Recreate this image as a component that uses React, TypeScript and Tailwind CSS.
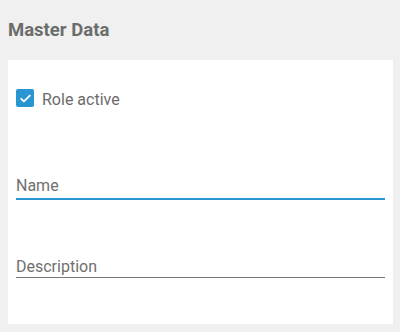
import React, { useState } from "react";

function Field({ label, active }: { label: string; active?: boolean }) {
  return (
    <div className={active ? "border-b-2 border-[#2a96d1] pb-[2px]" : "border-b border-[#777777]"}>
      <span className="block text-[16px] leading-[20px] text-[#6f6f6f]">{label}</span>
    </div>
  );
}

export default function App() {
  const [checked, setChecked] = useState(true);

  return (
    <div className="h-[332px] w-[400px] bg-[#f0f0f0] pl-2 pr-[7px] font-['Roboto',sans-serif]">
      <h1 className="pt-[19px] pb-[19px] text-[18.5px] leading-[22px] font-bold text-[#6b6d6b]">Master Data</h1>
      <div className="bg-white px-2 pt-[29px] pb-[46px]">
        <label className="flex items-start gap-2 cursor-pointer">
          <button
            onClick={() => setChecked(!checked)}
            className={
              "flex h-[18px] w-[18px] items-center justify-center rounded-[2px] " +
              (checked ? "bg-[#2a96d1]" : "border-2 border-[#777777] bg-white")
            }
          >
            {checked && (
              <svg width="13" height="13" viewBox="0 0 24 24" fill="none">
                <path d="M4 12.5l5 5L20 6.5" stroke="white" strokeWidth="3.2" strokeLinecap="round" strokeLinejoin="round" />
              </svg>
            )}
          </button>
          <span className="mt-[1px] text-[16px] leading-[20px] text-[#6b6b6b]">Role active</span>
        </label>
        <div className="mt-[66px]">
          <Field label="Name" active />
        </div>
        <div className="mt-[57px]">
          <Field label="Description" />
        </div>
      </div>
    </div>
  );
}
